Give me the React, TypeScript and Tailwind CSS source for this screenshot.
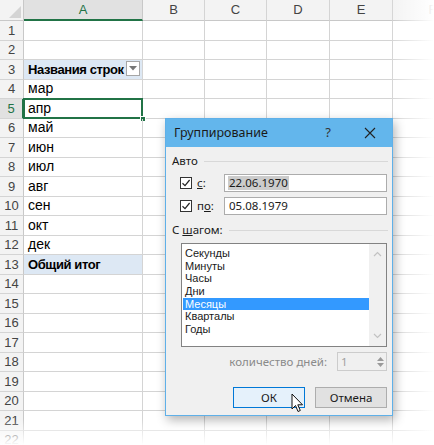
import React from "react";

const cols = [
  { key: "A", w: 119 },
  { key: "B", w: 62 },
  { key: "C", w: 62 },
  { key: "D", w: 63 },
  { key: "E", w: 63 },
  { key: "F", w: 80 },
];

const cellText: Record<number, { t: string; bold?: boolean; blue?: boolean }> = {
  3: { t: "Названия строк", bold: true, blue: true },
  4: { t: "мар" },
  5: { t: "апр" },
  6: { t: "май" },
  7: { t: "июн" },
  8: { t: "июл" },
  9: { t: "авг" },
  10: { t: "сен" },
  11: { t: "окт" },
  12: { t: "дек" },
  13: { t: "Общий итог", bold: true, blue: true },
};

function Check() {
  return (
    <div className="w-[12px] h-[12px] border border-[#333] bg-white flex items-center justify-center">
      <svg width="10" height="10" viewBox="0 0 10 10">
        <path d="M1.5 5.2 L4 7.6 L8.6 2" fill="none" stroke="#222" strokeWidth="1.2" />
      </svg>
    </div>
  );
}

export default function App() {
  const rows = Array.from({ length: 22 }, (_, i) => i + 1);
  return (
    <div
      className="relative w-[434px] h-[445px] overflow-hidden bg-white"
      style={{ fontFamily: "'Liberation Sans', Arial, sans-serif" }}
    >
      {/* header */}
      <div className="flex h-[21px]">
        <div className="w-[24px] shrink-0 bg-[#f3f3f3] border-r border-b border-[#c8c8c8] relative">
          <svg className="absolute right-[2px] bottom-[2px]" width="12" height="12" viewBox="0 0 12 12">
            <polygon points="12,0 12,12 0,12" fill="#d4d4d4" />
          </svg>
        </div>
        {cols.map((c) => (
          <div
            key={c.key}
            className={
              c.key === "A"
                ? "shrink-0 bg-[#e1e1e1] border-r border-[#c8c8c8] border-b-2 border-b-[#217346] flex items-center justify-center text-[13px] text-[#217346]"
                : "shrink-0 bg-[#f3f3f3] border-r border-b border-[#d4d4d4] border-b-[#c8c8c8] flex items-center justify-center text-[13px] text-[#444]"
            }
            style={{ width: c.w }}
          >
            {c.key}
          </div>
        ))}
      </div>
      {rows.map((r) => {
        const ct = cellText[r];
        const sel = r === 5;
        return (
          <div key={r} className="flex h-[19.5px]">
            <div
              className={
                sel
                  ? "w-[24px] shrink-0 bg-[#e1e1e1] border-r-2 border-r-[#217346] border-b border-b-[#d4d4d4] flex items-center justify-center text-[13px] text-[#217346]"
                  : "w-[24px] shrink-0 bg-[#f3f3f3] border-r border-r-[#c8c8c8] border-b border-b-[#d4d4d4] flex items-center justify-center text-[13px] text-[#444]"
              }
            >
              {r}
            </div>
            {cols.map((c) => {
              if (c.key === "A") {
                return (
                  <div
                    key={c.key}
                    className={
                      (ct?.blue ? "bg-[#dde8f4] " : "") +
                      "relative shrink-0 border-r border-b border-[#d4d4d4] flex items-center pl-[4px] text-[14px] text-black"
                    }
                    style={{ width: c.w }}
                  >
                    <span className={ct?.bold ? "font-bold text-[13px] tracking-[-0.4px]" : ""}>{ct?.t}</span>
                    {r === 3 && (
                      <div className="absolute right-[2px] top-[1px] w-[14px] h-[15px] bg-white border border-[#a6a6a6] flex items-center justify-center">
                        <svg width="8" height="5" viewBox="0 0 8 5">
                          <polygon points="0,0 8,0 4,4.5" fill="#777" />
                        </svg>
                      </div>
                    )}
                    {sel && (
                      <>
                        <div className="absolute left-[-1px] top-[-1px] right-[-1px] bottom-[-1px] border-2 border-[#217346]" />
                        <div className="absolute right-[-4px] bottom-[-4px] w-[6px] h-[6px] bg-[#217346] border border-white" />
                      </>
                    )}
                  </div>
                );
              }
              return (
                <div
                  key={c.key}
                  className="shrink-0 border-r border-b border-[#d4d4d4]"
                  style={{ width: c.w }}
                />
              );
            })}
          </div>
        );
      })}

      {/* fades */}
      <div className="absolute right-0 top-0 h-full w-[44px] bg-gradient-to-r from-transparent to-white" />
      <div className="absolute left-0 bottom-0 w-full h-[26px] bg-gradient-to-b from-transparent to-white" />

      {/* dialog */}
      <div
        className="absolute left-[165px] top-[118px] w-[228px] h-[298px] bg-[#f0f0f0] border border-[#5fb0e8] shadow-[2px_4px_10px_rgba(0,0,0,0.3)] flex flex-col text-[11.5px] text-[#1a1a1a]"
        style={{ fontFamily: "'Noto Sans', 'Open Sans', sans-serif" }}
      >
        <div className="h-[28px] bg-[#63b6ec] flex items-center pl-[8px] text-[12.5px] text-[#1a1a1a]">
          <span className="flex-1">Группирование</span>
          <span className="w-[20px] text-center mr-[26px] text-[13px] text-[#333]">?</span>
          <svg className="mr-[16px]" width="12" height="12" viewBox="0 0 12 12">
            <path d="M1 1 L11 11 M11 1 L1 11" stroke="#222" strokeWidth="1.1" />
          </svg>
        </div>
        <div className="flex flex-col px-[6px] pr-[5px]">
          <div className="mt-[6px] h-[16px] flex items-center gap-[6px]">
            <span>Авто</span>
            <div className="flex-1 h-px bg-[#d8d8d8] mr-[-1px]" />
          </div>
          <div className="mt-[5px] h-[18px] flex items-center">
            <div className="ml-[8px]"><Check /></div>
            <span className="ml-[5px] w-[27px]"><span className="underline">с</span>:</span>
            <div className="flex-1 h-[18px] bg-white border border-[#acacac] flex items-center pl-[3px]">
              <span className="bg-[#cccccc] leading-[14px] px-px">22.06.1970</span>
            </div>
          </div>
          <div className="mt-[5px] h-[18px] flex items-center">
            <div className="ml-[8px]"><Check /></div>
            <span className="ml-[5px] w-[27px]">п<span className="underline">о</span>:</span>
            <div className="flex-1 h-[18px] bg-white border border-[#acacac] flex items-center pl-[4px]">
              05.08.1979
            </div>
          </div>
          <div className="mt-[7px] h-[16px] flex items-center gap-[6px]">
            <span>С <span className="underline">ш</span>агом:</span>
            <div className="flex-1 h-px bg-[#d8d8d8] mr-[-1px]" />
          </div>
          <div className="mt-[5px] ml-[9px] h-[104px] bg-white border border-[#828282] flex">
            <div
              className="flex-1 flex flex-col pt-[3px] pl-px text-[11px]"
              style={{ fontFamily: "'Liberation Sans', Arial, sans-serif" }}
            >
              {["Секунды", "Минуты", "Часы", "Дни", "Месяцы", "Кварталы", "Годы"].map((s) => (
                <div
                  key={s}
                  className={
                    s === "Месяцы"
                      ? "h-[12.7px] leading-[12.7px] pl-[2px] bg-[#3399ff] text-white"
                      : "h-[12.7px] leading-[12.7px] pl-[2px]"
                  }
                >
                  {s}
                </div>
              ))}
            </div>
            <div className="w-[17px] bg-[#f0f0f0] flex flex-col items-center justify-between py-[7px]">
              <svg width="9" height="6" viewBox="0 0 9 6">
                <path d="M1 5 L4.5 1.5 L8 5" fill="none" stroke="#c2c2c2" strokeWidth="1.2" />
              </svg>
              <svg width="9" height="6" viewBox="0 0 9 6">
                <path d="M1 1 L4.5 4.5 L8 1" fill="none" stroke="#c2c2c2" strokeWidth="1.2" />
              </svg>
            </div>
          </div>
          <div className="mt-[5px] h-[19px] flex items-center justify-end">
            <span className="text-[#8a8a8a] mr-[10px]">количество дней:</span>
            <div className="w-[50px] h-[19px] border border-[#cccccc] flex items-center">
              <span className="flex-1 pl-[3px] text-[#a0a0a0]">1</span>
              <div className="w-[12px] h-full flex flex-col items-center justify-center gap-[2px]">
                <svg width="7" height="4" viewBox="0 0 7 4"><polygon points="0,4 7,4 3.5,0" fill="#9a9a9a" /></svg>
                <svg width="7" height="4" viewBox="0 0 7 4"><polygon points="0,0 7,0 3.5,4" fill="#9a9a9a" /></svg>
              </div>
            </div>
          </div>
          <div className="mt-[16px] h-[21px] flex justify-end gap-[10px]">
            <div className="w-[72px] h-[21px] bg-[#e5f1fb] border border-[#0078d7] flex items-center justify-center">
              ОК
            </div>
            <div className="w-[72px] h-[21px] bg-[#e1e1e1] border border-[#adadad] flex items-center justify-center">
              Отмена
            </div>
          </div>
        </div>
      </div>

      {/* cursor */}
      <svg className="absolute left-[291px] top-[393px]" width="14" height="21" viewBox="0 0 14 21">
        <path d="M1 1 L1 16 L4.5 12.5 L7 18.5 L9.3 17.5 L6.8 11.8 L11.5 11.8 Z" fill="white" stroke="#111" strokeWidth="1" strokeLinejoin="round" />
      </svg>
    </div>
  );
}
